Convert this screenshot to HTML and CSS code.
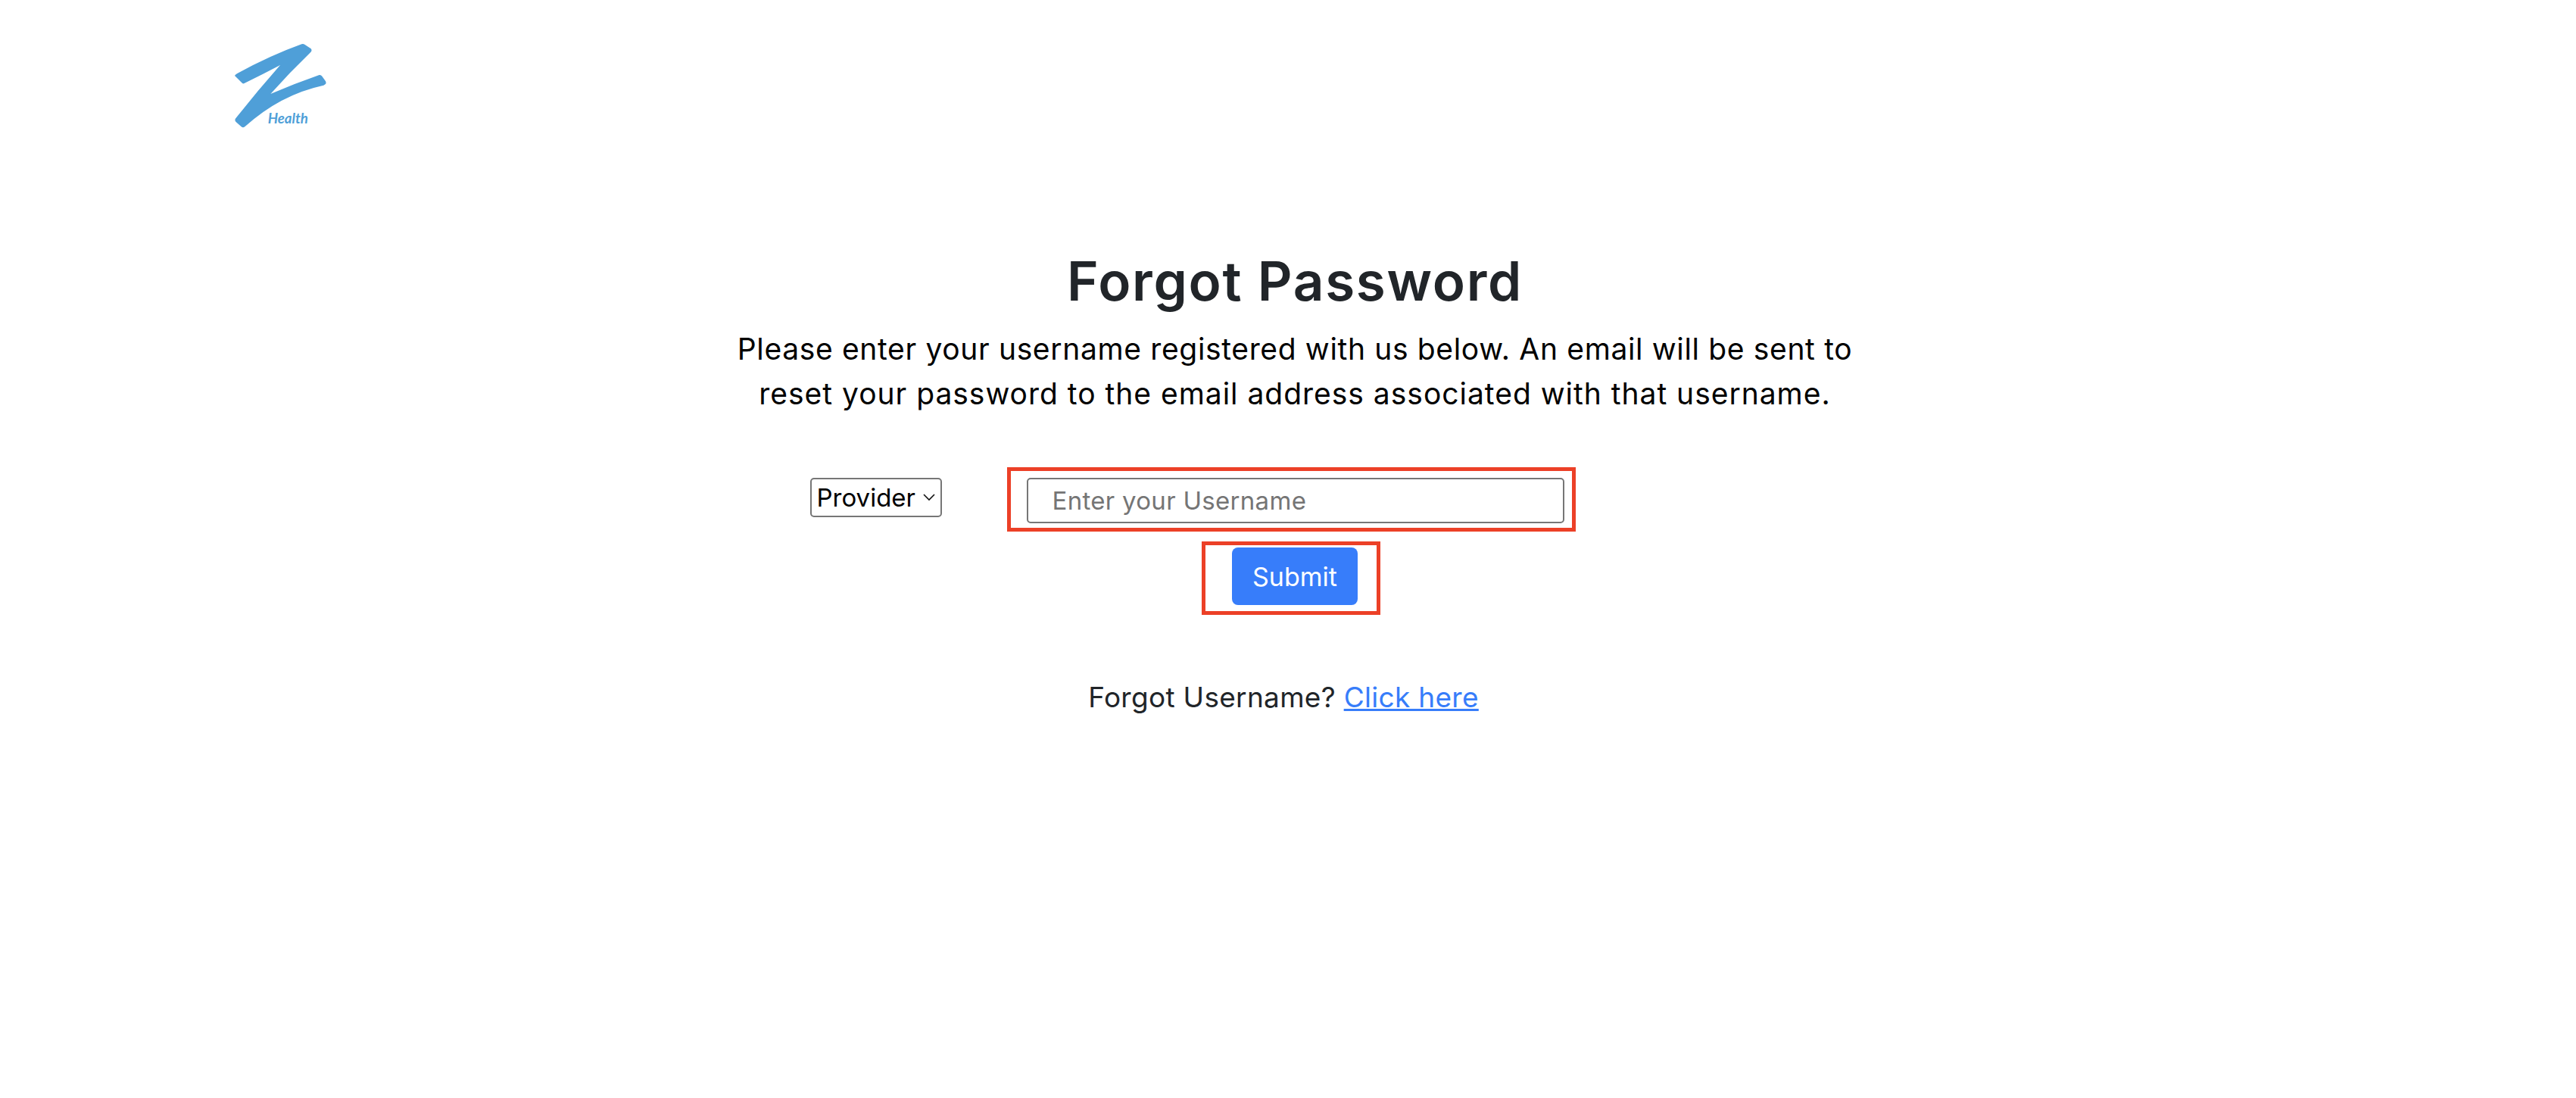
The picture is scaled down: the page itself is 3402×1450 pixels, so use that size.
FILE: index.html
```html
<!DOCTYPE html>
<html lang="en">
<head>
<meta charset="utf-8">
<title>Forgot Password</title>
<link rel="stylesheet" href="styles.css">
</head>
<body>
<header class="top">
  <svg class="logo" viewBox="0 0 570 480" role="img" aria-label="Z Health">
    <path class="logo-z" d="M90 210 Q92 205 100 201 Q230 130 355 85 Q362 83 368 87 L392 103 Q398 110 390 118 Q310 195 232 282 Q330 240 425 207 Q432 206 436 212 L450 232 Q456 243 442 248 Q270 285 130 412 Q123 418 116 412 L94 392 Q88 385 95 377 Q180 270 270 168 Q200 205 128 240 Q122 243 118 238 Z"/>
    <text class="logo-text" x="221" y="400">Health</text>
  </svg>
</header>
<main class="content">
  <h1 class="title">Forgot Password</h1>
  <p class="lead">Please enter your username registered with us below. An email will be sent to<br><span class="lead-second">reset your password to the email address associated with that username.</span></p>
  <form class="form">
    <div class="fields">
      <select class="role"><option>Provider</option></select>
      <div class="mark mark-input"><input class="username" type="text" placeholder="Enter your Username"></div>
    </div>
    <div class="mark mark-button"><button class="submit" type="button">Submit</button></div>
  </form>
  <p class="alt">Forgot Username? <a href="#">Click here</a></p>
</main>
</body>
</html>
```
FILE: styles.css
```css
* { box-sizing: border-box; }
html, body { margin: 0; background: #fff; }
body { font-family: Inter, "Open Sans", sans-serif; height: 1450px; overflow: hidden; }
.top { height: 190px; padding: 30px 0 0 280px; }
.logo { display: block; width: 190px; height: 160px; }
.logo-z { fill: #4f9fd8; }
.logo-text { font-family: Lato, sans-serif; font-style: italic; font-weight: 700; font-size: 56px; fill: #4f9fd8; }
.content { display: flex; flex-direction: column; align-items: center; padding-left: 18px; }
.title { margin: 139px 0 0; font-size: 71px; line-height: 84px; font-weight: 600; color: #212529; letter-spacing: 1.7px; }
.lead { margin: 18px 0 0; text-align: center; font-size: 39px; line-height: 59px; color: #000; letter-spacing: 0.65px; }
.lead-second { letter-spacing: 0.98px; }
.form { margin: 68px 10px 0 0; display: flex; flex-direction: column; align-items: center; }
.fields { display: flex; align-items: flex-start; gap: 86px; margin-left: -260px; }
.role { appearance: none; margin-top: 14px; width: 174px; height: 52px; font: 33px Inter, sans-serif; color: #000; border: 2px solid #767676; border-radius: 5px; padding: 0 0 0 7px; background: #fff url("data:image/svg+xml,%3Csvg xmlns='http://www.w3.org/2000/svg' width='16' height='10'%3E%3Cpath d='M1 1l7 7 7-7' fill='none' stroke='%23111' stroke-width='1.6'/%3E%3C/svg%3E") no-repeat right 7px center; }
.mark { border: 5px solid #ec4027; display: flex; justify-content: center; }
.mark-input { width: 751px; height: 85px; padding: 9px 10px 0 21px; }
.username { width: 710px; height: 60px; font: 33px Inter, sans-serif; letter-spacing: 0.3px; border: 2px solid #767676; border-radius: 5px; padding: 0 32px; background: #fff; }
.username::placeholder { color: #757575; opacity: 1; }
.mark-button { margin-top: 13px; width: 236px; height: 97px; padding: 3px 25px 0 35px; align-items: flex-start; }
.submit { width: 166px; height: 76px; border: 0; border-radius: 8px; background: #377dfa; color: #fff; font: 34px Inter, sans-serif; padding: 0; }
.alt { margin: 82px 30px 0 0; font-size: 37px; line-height: 54px; color: #212529; letter-spacing: 0.3px; }
.alt a { color: #377dfa; }
```
